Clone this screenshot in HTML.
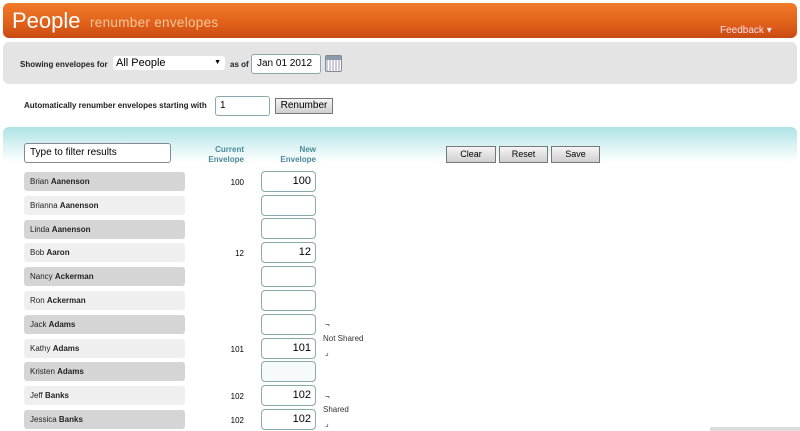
<!DOCTYPE html>
<html><head><style>
body{margin:0;width:800px;height:431px;overflow:hidden;background:#fff;font-family:"Liberation Sans",Arial,sans-serif;position:relative}
.a{position:absolute}
*{box-sizing:border-box}
.hdr{left:3px;top:3px;width:794px;height:35px;border-radius:6px;background:linear-gradient(#f07a2a,#e0601a 60%,#c84a10);}
.t1{left:12px;top:8px;color:#fff;font-size:22px}
.t2{left:90px;top:15px;color:#f8c79a;font-size:13.5px;letter-spacing:.3px}
.fb{left:720px;top:25px;color:#fde;font-size:10px}
.gp{left:3px;top:42px;width:794px;height:42px;background:#e4e4e4;border-radius:6px}
.lbl{font-size:8px;color:#222;font-weight:bold}
.inp{background:#fff;border:1px solid #8aa;border-radius:3px;font-size:11px}
.btn{background:linear-gradient(#f4f4f4,#cfcfcf);border:1px solid #777;font-size:9px;text-align:center}
.teal{left:3px;top:127px;width:794px;height:35px;border-radius:6px 6px 0 0;background:linear-gradient(#aee3e4,#fff)}
.nm{left:24px;width:161px;height:19px;border-radius:3px;font-size:8px;line-height:19px;padding-left:6px;color:#222}
.d{background:#d5d5d5}.l{background:#efefef}
.ne{left:261px;width:55px;height:21px;border:1px solid #8aa;border-radius:4px;font-size:11px;text-align:right;padding-right:4px;line-height:19px;background:#fff}
.ce{left:225px;width:19px;text-align:right;font-size:8px}
.sm{font-size:8px;color:#333}
.hd{font-size:8px;color:#4a8a9a;font-weight:bold;text-align:right;line-height:10px}
</style></head><body>
<div class="a hdr"></div>
<div class="a t1">People</div>
<div class="a t2">renumber envelopes</div>
<div class="a fb">Feedback ▾</div>
<div class="a gp"></div>
<div class="a lbl" style="left:20px;top:60px">Showing envelopes for</div>
<div class="a inp" style="left:113px;top:56px;width:112px;height:14px;border:none;line-height:14px;padding-left:3px">All People<span style="position:absolute;right:4px;font-size:7px">▼</span></div>
<div class="a lbl" style="left:230px;top:60px">as of</div>
<div class="a inp" style="left:251px;top:54px;width:70px;height:20px;line-height:18px;padding-left:5px;font-size:10px">Jan 01 2012</div>
<div class="a" style="left:325px;top:55px;width:17px;height:17px;border:1px solid #889;border-radius:2px;background:repeating-linear-gradient(90deg,#ccd 0 2px,#fff 2px 3px)"><div style="height:4px;background:#8a9aa8"></div></div>
<div class="a lbl" style="left:24px;top:101px">Automatically renumber envelopes starting with</div>
<div class="a inp" style="left:215px;top:96px;width:55px;height:20px;line-height:18px;padding-left:4px;font-size:10px">1</div>
<div class="a btn" style="left:275px;top:98px;width:58px;height:16px;font-size:10px;line-height:14px">Renumber</div>
<div class="a teal"></div>
<div class="a inp" style="left:24px;top:143px;width:147px;height:20px;line-height:18px;padding-left:5px;font-size:10px;border-color:#889">Type to filter results</div>
<div class="a hd" style="left:200px;top:145px;width:44px">Current<br>Envelope</div>
<div class="a hd" style="left:270px;top:145px;width:46px">New<br>Envelope</div>
<div class="a btn" style="left:446px;top:146px;width:50px;height:17px;line-height:15px">Clear</div>
<div class="a btn" style="left:499px;top:146px;width:49px;height:17px;line-height:15px">Reset</div>
<div class="a btn" style="left:551px;top:146px;width:49px;height:17px;line-height:15px">Save</div>

<div class="a nm d" style="top:172px">Brian <b>Aanenson</b></div><div class="a ce" style="top:178px">100</div><div class="a ne" style="top:171px">100</div>
<div class="a nm l" style="top:196px">Brianna <b>Aanenson</b></div><div class="a ne" style="top:195px"></div>
<div class="a nm d" style="top:220px">Linda <b>Aanenson</b></div><div class="a ne" style="top:218px"></div>
<div class="a nm l" style="top:243px">Bob <b>Aaron</b></div><div class="a ce" style="top:249px">12</div><div class="a ne" style="top:242px">12</div>
<div class="a nm d" style="top:267px">Nancy <b>Ackerman</b></div><div class="a ne" style="top:266px"></div>
<div class="a nm l" style="top:291px">Ron <b>Ackerman</b></div><div class="a ne" style="top:290px"></div>
<div class="a nm d" style="top:315px">Jack <b>Adams</b></div><div class="a ne" style="top:314px"></div>
<div class="a nm l" style="top:339px">Kathy <b>Adams</b></div><div class="a ce" style="top:345px">101</div><div class="a ne" style="top:338px">101</div>
<div class="a nm d" style="top:362px">Kristen <b>Adams</b></div><div class="a ne" style="top:361px;background:#f6fafa"></div>
<div class="a nm l" style="top:386px">Jeff <b>Banks</b></div><div class="a ce" style="top:392px">102</div><div class="a ne" style="top:385px">102</div>
<div class="a nm d" style="top:410px">Jessica <b>Banks</b></div><div class="a ce" style="top:416px">102</div><div class="a ne" style="top:409px">102</div>

<div class="a sm" style="left:325px;top:320px">¬</div>
<div class="a sm" style="left:323px;top:334px">Not Shared</div>
<div class="a sm" style="left:325px;top:348px">⌟</div>
<div class="a sm" style="left:325px;top:392px">¬</div>
<div class="a sm" style="left:323px;top:405px">Shared</div>
<div class="a sm" style="left:325px;top:419px">⌟</div>
<div class="a" style="left:710px;top:427px;width:90px;height:4px;background:#ddd"></div>
</body></html>
